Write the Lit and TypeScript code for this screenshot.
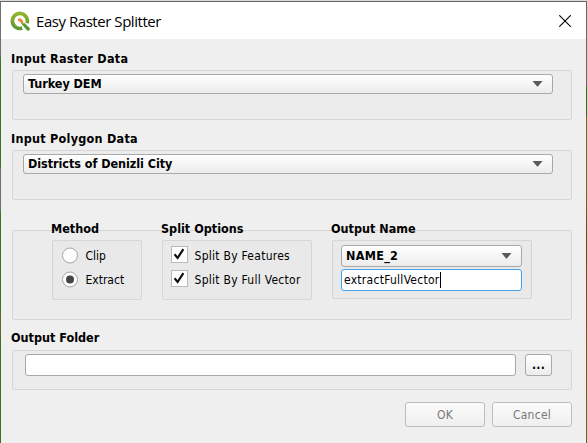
import { LitElement, html, css, svg } from "lit";
import { customElement } from "lit/decorators.js";

const arrow = html`<svg class="arrow" width="11" height="6" viewBox="0 0 11 6">
  <path d="M0.5 0H10.5L5.9 5.4H5.1Z" fill="#5a5a5a" />
</svg>`;

const tick = svg`<path d="M3.6 8.3L6.6 12L12.4 3.2" fill="none" stroke="#111" stroke-width="2.2" />`;

@customElement("app-root")
export class AppRoot extends LitElement {
  static styles = css`
    :host {
      display: block;
      width: 587px;
      height: 443px;
      overflow: hidden;
      font: 12px/16px "DejaVu Sans Condensed", "DejaVu Sans", sans-serif;
      font-stretch: condensed;
      letter-spacing: 0.27px;
      color: #000;
    }
    * { box-sizing: border-box; }
    svg { display: block; flex: none; }
    .desktop {
      height: 443px;
      padding: 1px 1px 0;
      background:
        linear-gradient(#d9d9d9, #d9d9d9) 0 0 / 100% 1px no-repeat,
        linear-gradient(#707070 0 56px, #3b7426 58px 167px, #707070 168px 210px, #3b7426 212px 300px, #6b6428 325px, #35731f 350px) 0 0 / 1px 100% no-repeat,
        linear-gradient(#666 0 86px, #217a18 87px 116px, #746c12 118px 190px, #5c4a10 240px, #7a4f14 300px, #6b6412 400px) 100% 0 / 1px 100% no-repeat;
    }
    .dialog { height: 442px; background: #efefef; border-top: 1px solid #686868; }
    .titlebar { display: flex; align-items: center; height: 37px; padding: 0 15px 0 9px; background: #fff; }
    .title {
      flex: 1;
      margin-left: 6px;
      font: 15px/20px "Open Sans", "Noto Sans", sans-serif;
      letter-spacing: -0.45px;
    }
    .content { padding: 0 14px 0 11px; }
    .label { height: 19px; font-weight: bold; font-size: 12.5px; letter-spacing: 0; white-space: nowrap; margin-left: -1px; }
    .source .label { letter-spacing: 0.26px; }
    .box { border: 1px solid #d6d6d6; border-radius: 2px; background: #ececec; }
    .source { padding-top: 12px; }
    .source + .source { padding-top: 11px; }
    .source .box { height: 50px; padding: 3px 18px 0 10px; }
    .source .combo { height: 20px; }
    .combo {
      display: flex;
      align-items: center;
      justify-content: space-between;
      padding: 0 9px 0 4px;
      border: 1px solid #a9a9a9;
      border-radius: 3px;
      background: linear-gradient(#fff, #ececec);
      font-weight: bold;
      font-size: 12.5px;
      letter-spacing: -0.05px;
      white-space: nowrap;
    }
    .combo .arrow { margin-bottom: 1px; }
    .options { display: flex; gap: 20px; height: 90px; margin-top: 30px; padding-left: 39px; }
    .group { margin-top: -10px; }
    .group .box { background: #e9e9e9; height: 60px; padding: 3px 9px 0; }
    .method .box { width: 90px; }
    .split .box { width: 150px; padding-left: 8px; }
    .output .box { width: 200px; height: 59px; padding: 4px 9px 0 8px; }
    .output .combo { height: 22px; letter-spacing: 0.3px; }
    .choice { display: flex; align-items: center; gap: 6.5px; height: 24px; margin-top: -1px; white-space: nowrap; }
    .choice + .choice { margin-top: 0; }
    .choice svg { margin-bottom: 1px; }
    .choice span { padding-top: 2px; }
    .choice.radio svg { margin: 1px 0 0; }
    .radio { letter-spacing: 0; }
    .input { border: 1px solid #a9a9a9; border-radius: 3px; background: #fff; height: 22px; }
    .input.active { display: flex; align-items: center; margin-top: 2px; padding-left: 2px; border-color: #45a3ee; }
    .caret { width: 1px; height: 16px; background: #000; }
    .folder { padding-top: 10px; }
    .folder .label { height: 20px; }
    .folder .box { display: flex; height: 40px; padding: 3px 19px 0 12px; gap: 9px; }
    .folder .input { flex: 1; }
    .btn {
      border: 1px solid #a9a9a9;
      border-radius: 3px;
      background: linear-gradient(#fff, #ececec);
      text-align: center;
    }
    .browse { width: 27px; height: 22px; line-height: 21px; font-weight: bold; }
    .actions { display: flex; justify-content: flex-end; gap: 7px; margin-top: 12px; }
    .actions .btn { width: 80px; height: 25px; line-height: 25px; color: #787878; border-color: #bdbdbd; background: linear-gradient(#fbfbfb, #efefef); }
  `;

  private source(label: string, value: string) {
    return html`<div class="source">
      <div class="label"><span>${label}</span></div>
      <div class="box"><div class="combo"><span>${value}</span>${arrow}</div></div>
    </div>`;
  }

  private radio(label: string, on: boolean) {
    return html`<div class="choice radio">
      <svg width="17" height="17" viewBox="0 0 17 17">
        <circle cx="8" cy="8.5" r="7.5" fill="#fff" stroke="#a4a4a4" />
        ${on ? svg`<circle cx="8" cy="8.5" r="4" fill="#444" />` : ""}
      </svg>
      <span>${label}</span>
    </div>`;
  }

  private check(label: string) {
    return html`<div class="choice">
      <svg width="17" height="17" viewBox="0 0 17 17">
        <rect x="0.5" y="0.5" width="16" height="16" fill="#fff" stroke="#b9b9b9" />
        ${tick}
      </svg>
      <span>${label}</span>
    </div>`;
  }

  render() {
    return html`<div class="desktop"><div class="dialog">
      <div class="titlebar">
        <svg width="20" height="20" viewBox="0 0 20 20">
          <defs>
            <linearGradient id="ring" x1="0" y1="0" x2="0" y2="1">
              <stop offset="0" stop-color="#8fb52c" />
              <stop offset="1" stop-color="#5a9a34" />
            </linearGradient>
          </defs>
          <path d="M12.2 17.1A7.5 7.5 0 1 1 17 12.3" fill="none" stroke="url(#ring)" stroke-width="3.7" />
          <path d="M11.4 12.4H14.6L19.4 17V19.2H17.2Z" fill="#55952f" stroke="#55952f" stroke-width="0.6" />
          <path d="M8 7.6H10.8L13.2 10V12H11.2L8 9.6Z" fill="#f0872c" />
        </svg>
        <span class="title">Easy Raster Splitter</span>
        <svg width="12" height="12" viewBox="0 0 12 12">
          <path d="M0.3 0.3L11.7 11.7M11.7 0.3L0.3 11.7" stroke="#000" stroke-width="1.1" />
        </svg>
      </div>
      <div class="content">
        ${this.source("Input Raster Data", "Turkey DEM")}
        ${this.source("Input Polygon Data", "Districts of Denizli City")}
        <div class="options box">
          <div class="group method">
            <div class="label">Method</div>
            <div class="box">${this.radio("Clip", false)}${this.radio("Extract", true)}</div>
          </div>
          <div class="group split">
            <div class="label">Split Options</div>
            <div class="box">${this.check("Split By Features")}${this.check("Split By Full Vector")}</div>
          </div>
          <div class="group output">
            <div class="label">Output Name</div>
            <div class="box">
              <div class="combo"><span>NAME_2</span>${arrow}</div>
              <div class="input active"><span>extractFullVector</span><i class="caret"></i></div>
            </div>
          </div>
        </div>
        <div class="folder">
          <div class="label">Output Folder</div>
          <div class="box"><div class="input"></div><div class="btn browse">...</div></div>
        </div>
        <div class="actions"><div class="btn">OK</div><div class="btn">Cancel</div></div>
      </div>
    </div></div>`;
  }
}
